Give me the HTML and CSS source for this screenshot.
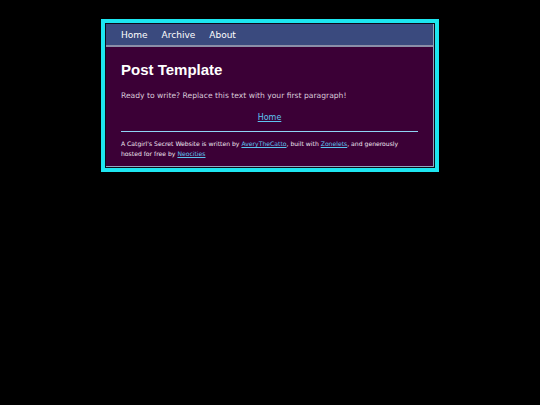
FILE: index.html
```html
<!DOCTYPE html>
<html lang="en">
<head>
  <meta charset="UTF-8" />
  <meta name="viewport" content="width=device-width, initial-scale=1.0" />
  <title>Post Template</title>
  <link rel="stylesheet" href="styles.css">
</head>
<body>
  <div id="container">
    <div id="inner">
      <nav class="navbar">
        <a href="#">Home</a>
        <a href="#">Archive</a>
        <a href="#">About</a>
      </nav>
      <main class="content">
        <h1>Post Template</h1>
        <p>Ready to write? Replace this text with your first paragraph!</p>
        <p class="back"><a href="#">Home</a></p>
        <hr>
        <footer class="footer">
          A Catgirl's Secret Website is written by <a href="#">AveryTheCatto</a>, built with <a href="#">Zonelets</a>, and generously hosted for free by <a href="#">Neocities</a>
        </footer>
      </main>
    </div>
  </div>
</body>
</html>
```

FILE: styles.css
```css
html, body {
  margin: 0;
  padding: 0;
}
body {
  background: #000;
  font-family: "DejaVu Sans", Verdana, sans-serif;
  color: #d8c8d8;
}
#container {
  width: 330px;
  margin: 19px auto 0;
  border: 4px solid #1de6f0;
  background: #0c0c1a;
}
#inner {
  margin: 1px;
  border-right: 1px solid #8fa8c0;
  border-bottom: 1px solid #8fa8c0;
}
.navbar {
  display: flex;
  gap: 14px;
  padding: 1px 15px 0;
  box-sizing: border-box;
  height: 23px;
  align-items: center;
  background: #3a4a7e;
  border-bottom: 2px solid #8a8ea8;
  font-size: 9px;
}
.navbar a {
  color: #fff;
  text-decoration: none;
}
.content {
  background: #3b0036;
  padding: 14px 15px 7px;
}
h1 {
  font-family: "Liberation Sans", Arial, sans-serif;
  font-size: 15px;
  font-weight: bold;
  color: #fff;
  margin: 0 0 13px;
}
p {
  font-size: 7.6px;
  margin: 0 0 13px;
}
.back {
  text-align: center;
  font-size: 8px;
  margin-bottom: 9px;
}
a {
  color: #5ec4f0;
}
hr {
  border: none;
  border-top: 1px solid #8fd4f4;
  margin: 0 0 7px;
}
.footer {
  font-size: 6.1px;
  line-height: 10px;
  color: #f0e6f0;
}
```
